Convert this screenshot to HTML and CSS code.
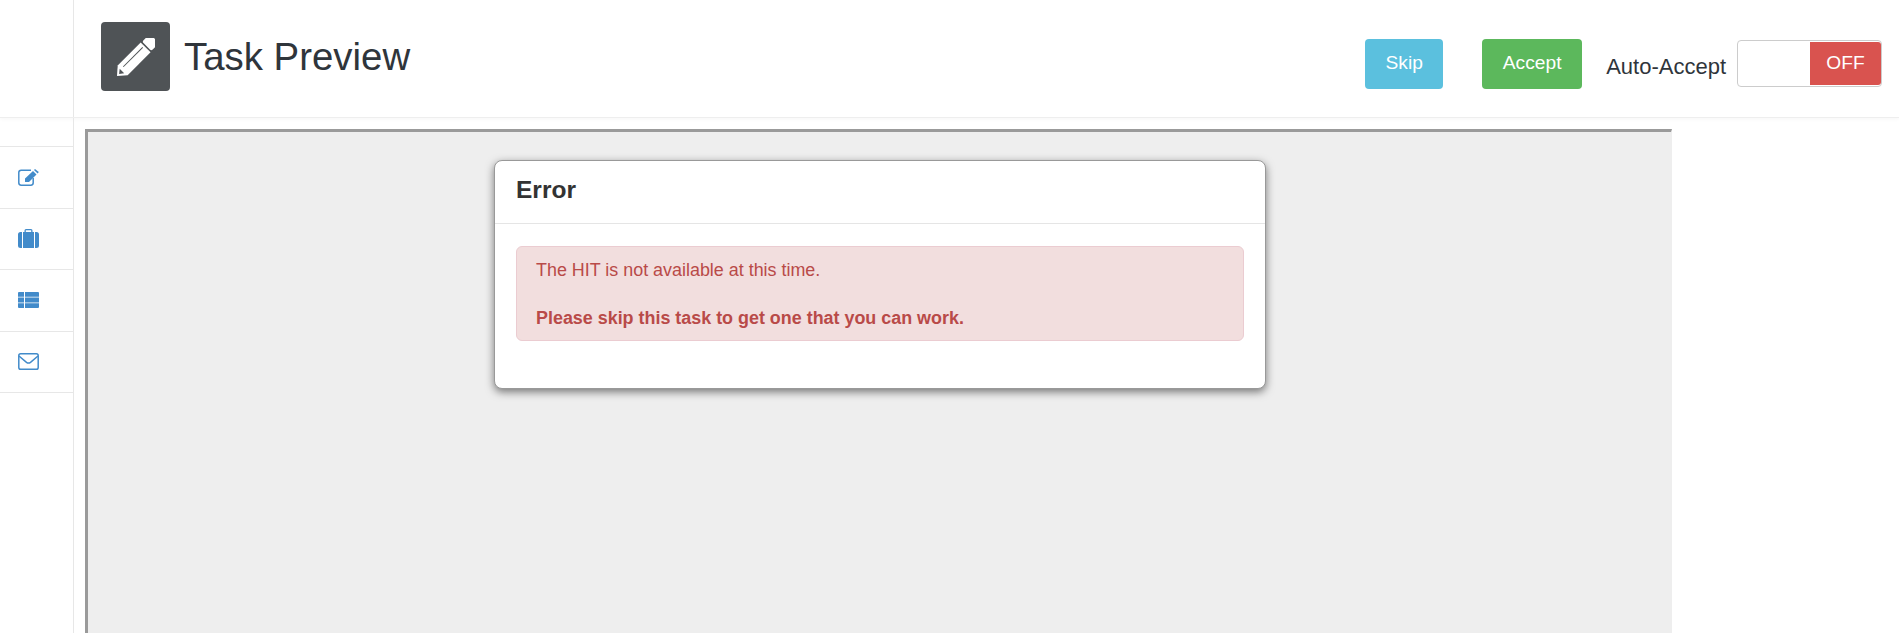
FILE: index.html
```
<!DOCTYPE html>
<html lang="en">
<head>
<meta charset="utf-8">
<title>Task Preview</title>
<link rel="stylesheet" href="styles.css">
</head>
<body>
<header class="topbar">
  <div class="brand-gap"></div>
  <div class="topbar-main">
    <div class="title-icon">
      <svg viewBox="0 0 38 38" width="38" height="38" fill="#fff"><g transform="translate(0 38) rotate(-45)"><path d="M0 0 8-7H40.500V7H8Z"/><path d="M3 0 7-3.200V3.200Z" fill="#4f5356"/><path d="M11-2.600H38.500V-1.600H11Z" fill="#4f5356"/><rect x="42" y="-6.500" width="11" height="13" rx="2"/></g></svg>
    </div>
    <h1 class="title">Task Preview</h1>
    <div class="actions">
      <button class="btn btn-skip">Skip</button>
      <button class="btn btn-accept">Accept</button>
      <span class="auto-label">Auto-Accept</span>
      <div class="toggle"><span class="toggle-off">OFF</span></div>
    </div>
  </div>
</header>
<div class="content">
  <nav class="sidebar">
    <a class="side-item">
      <svg viewBox="0 0 21 17" width="21" height="17" fill="none" stroke="#428bca" stroke-width="1.500"><path d="M13 1.200H3.200A2.400 2.400 0 0 0 .8 3.600V13.800A2.400 2.400 0 0 0 3.200 16.200H12.800A2.400 2.400 0 0 0 15.200 13.800V9"/><path d="M7 9.500 15 2 18.500 5.500 11 13H7Z" fill="#428bca" stroke="none"/><path d="M16 1 17 0 20.800 3 19.600 4.500Z" fill="#428bca" stroke="none"/></svg>
    </a>
    <a class="side-item">
      <svg viewBox="0 0 21 19" width="21" height="19" fill="#428bca"><path d="M6.500 3V1.500A1.500 1.500 0 0 1 8 0h5A1.500 1.500 0 0 1 14.500 1.500V3H16V19H5V3Zm1.300 0h5.400V1.300H7.800ZM0 5.500A2.500 2.500 0 0 1 2.500 3H4V19H2.500A2.500 2.500 0 0 1 0 16.500ZM17 3h1.500A2.500 2.500 0 0 1 21 5.500v11a2.500 2.500 0 0 1-2.500 2.500H17Z"/></svg>
    </a>
    <a class="side-item">
      <svg viewBox="0 0 21 16" width="21" height="16" fill="#428bca"><path d="M0 1a1 1 0 0 1 1-1h5v4.800H0Zm7-1h13a1 1 0 0 1 1 1v3.800H7ZM0 5.600h6v4.800H0Zm7 0h14v4.800H7Zm-7 5.600h6V16H1a1 1 0 0 1-1-1Zm7 0h14V15a1 1 0 0 1-1 1H7Z"/></svg>
    </a>
    <a class="side-item">
      <svg viewBox="0 0 21 17" width="21" height="17" fill="none" stroke="#428bca" stroke-width="1.500"><rect x=".8" y=".8" width="19.400" height="15.400" rx="1.800"/><path d="M1 3 8.500 9.300Q10.500 10.800 12.500 9.300L20 3"/></svg>
    </a>
  </nav>
  <main class="frame">
    <section class="modal">
      <h2 class="modal-title">Error</h2>
      <div class="modal-body">
        <div class="alert">
          <p class="alert-line">The HIT is not available at this time.</p>
          <p class="alert-line alert-strong">Please skip this task to get one that you can work.</p>
        </div>
      </div>
    </section>
  </main>
</div>
</body>
</html>
```
FILE: styles.css
```
* { box-sizing: border-box; }
html, body { height: 100%; }
body {
  margin: 0;
  height: 633px;
  overflow: hidden;
  background: #fff;
  font-family: "Liberation Sans", Arial, sans-serif;
  color: #333;
  display: flex;
  flex-direction: column;
}
.topbar {
  height: 118px;
  flex: none;
  display: flex;
  border-bottom: 1px solid #eee;
  box-shadow: 0 1px 4px rgba(0,0,0,.04);
}
.brand-gap {
  width: 74px;
  flex: none;
  border-right: 1px solid #e7e7e7;
}
.topbar-main {
  flex: 1;
  display: flex;
  align-items: flex-start;
  padding: 22px 17px 0 27px;
}
.title-icon {
  width: 69px;
  height: 69px;
  flex: none;
  background: #4f5356;
  border-radius: 4px;
  display: flex;
  align-items: center;
  justify-content: center;
}
.title {
  margin: 13px 0 0 14px;
  font-size: 38.400px;
  line-height: 44px;
  font-weight: 400;
  color: #2f353b;
}
.actions {
  margin-left: auto;
  display: flex;
  align-items: flex-start;
  padding-top: 17px;
}
.btn {
  height: 50px;
  border: 0;
  border-radius: 4px;
  color: #fff;
  font: 400 19.200px/28px "Liberation Sans", Arial, sans-serif;
  padding: 0 0 3px;
}
.btn-skip { background: #5bc0de; width: 78px; margin-right: 39px; }
.btn-accept { background: #5cb85c; width: 100px; margin-right: 24px; }
.auto-label {
  font-size: 22px;
  line-height: 32px;
  margin: 12px 11px 0 0;
  color: #2f353b;
}
.toggle {
  width: 145px;
  height: 47px;
  margin-top: 1px;
  border: 1px solid #ccc;
  border-radius: 4px;
  padding: 1px 0 1px 72px;
}
.toggle-off {
  display: block;
  height: 100%;
  background: #d9534f;
  color: #fff;
  font-size: 19.200px;
  line-height: 42px;
  text-align: center;
  border-radius: 0 3px 3px 0;
}
.content {
  flex: 1;
  display: flex;
  min-height: 0;
}
.sidebar {
  width: 74px;
  flex: none;
  border-right: 1px solid #e7e7e7;
  padding-top: 28px;
}
.side-item {
  height: 61.500px;
  display: flex;
  align-items: center;
  padding-left: 18px;
  border-top: 1px solid #e7e7e7;
}
.side-item:last-child { height: 62.500px; border-bottom: 1px solid #e7e7e7; }
.frame {
  width: 1587px;
  margin: 11px 0 0 11px;
  background: #eee;
  border-top: 3px solid #9a9a9a;
  border-left: 3px solid #9a9a9a;
  border-right: 1px solid #eee;
  padding: 28px 0 0 406px;
}
.modal {
  width: 772px;
  height: 229px;
  background: #fff;
  border: 1px solid #999;
  border-radius: 8px;
  box-shadow: 0 3px 9px rgba(0,0,0,.5);
}
.modal-title {
  margin: 0;
  height: 63px;
  padding: 15px 21px 0;
  font-size: 24.500px;
  line-height: 28px;
  font-weight: 700;
  color: #333;
  border-bottom: 1px solid #e5e5e5;
}
.modal-body { padding: 22px 21px 0; }
.alert {
  height: 95px;
  padding: 11px 19px;
  background: #f2dede;
  border: 1px solid #ebccd1;
  border-radius: 6px;
  color: #b94a48;
  font-size: 17.920px;
  line-height: 24px;
}
.alert-line { margin: 0; }
.alert-strong { margin-top: 24px; font-weight: 700; }
```
